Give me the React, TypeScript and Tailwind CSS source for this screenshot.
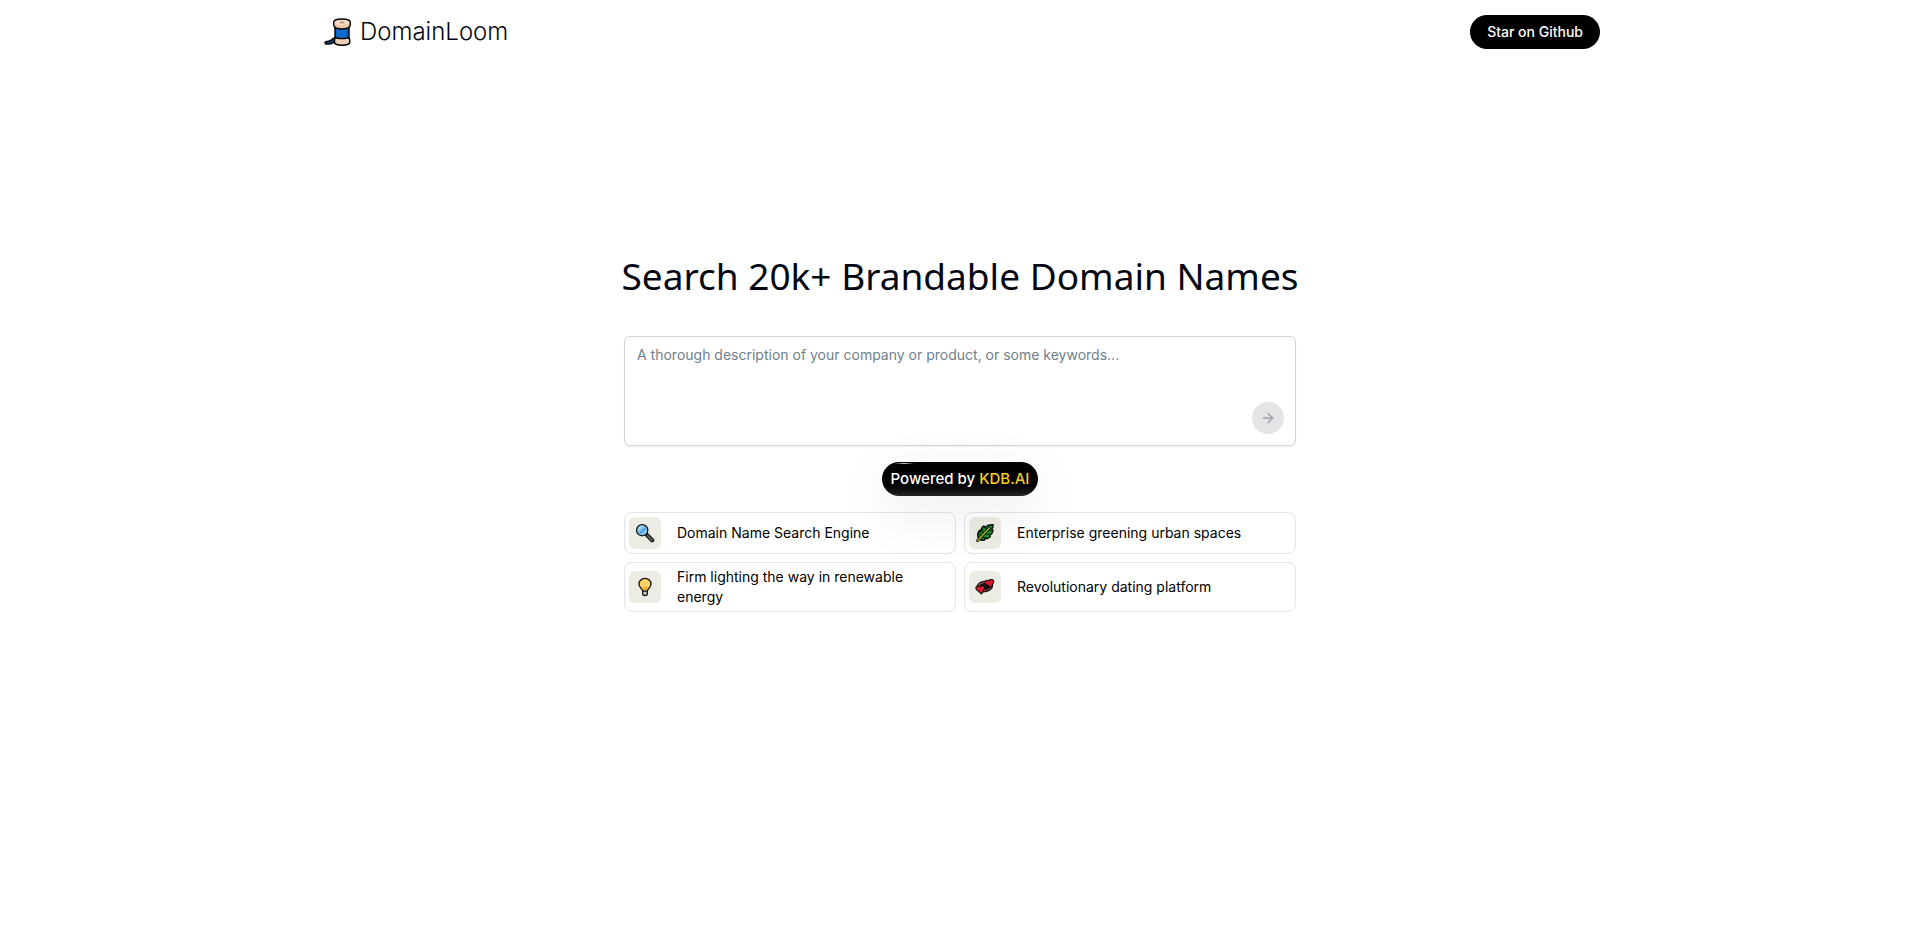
import { useState, type FormEvent, type ReactNode } from "react";
import { ArrowRight } from "lucide-react";

type Example = {
  label: string;
  icon: ReactNode;
};

const SpoolIcon = () => (
  <svg viewBox="0 0 28 28" className="size-7" aria-hidden="true">
    <path
      d="M10.500 20v3.500c-1.200 1.800-3.200 2.600-5.500 2.600H2.200c-1.600 0-1.700-2.200-.2-2.400 3-.2 4.500-.6 6-2.200.6-.8 1.300-1.400 2.500-1.500z"
      fill="#0b3f70"
      stroke="#000"
      strokeWidth="1.300"
      strokeLinejoin="round"
    />
    <path d="M11 8.500h14v13H11z" fill="#0a5fb8" stroke="#000" strokeWidth="1.400" />
    <path d="M13 9h9v12h-9z" fill="#0d6ccb" />
    <path
      d="M10.500 21.500c0-1 1-1.500 2-1.700 4 1.200 7 1.200 11 0 1 .2 2.200.8 2.200 1.700v3c0 1.500-3.500 2.700-7.600 2.700s-7.600-1.200-7.600-2.700z"
      fill="#f0cfb6"
      stroke="#000"
      strokeWidth="1.400"
      strokeLinejoin="round"
    />
    <path
      d="M9.700 4.200C9.700 2.300 13.400 1 18 1s8.300 1.300 8.300 3.200v2.600c0 1.600-1.300 2.700-2.300 3.200-4 1.300-8 1.300-12 0-1-.5-2.300-1.600-2.300-3.200z"
      fill="#edc5aa"
      stroke="#000"
      strokeWidth="1.400"
      strokeLinejoin="round"
    />
    <ellipse cx="18" cy="4.600" rx="7.200" ry="2.500" fill="#f9dfcc" />
    <ellipse cx="18" cy="4.600" rx="2.800" ry="1" fill="#b98f78" />
  </svg>
);

const SearchIcon = () => (
  <svg viewBox="0 0 20 20" className="size-5" aria-hidden="true">
    <path d="M11.500 11.500l5.700 5.700" stroke="#111" strokeWidth="4.200" strokeLinecap="round" />
    <path d="M12.500 12.500l4.700 4.700" stroke="#5c5f62" strokeWidth="2" strokeLinecap="round" />
    <circle cx="7.200" cy="7.200" r="5.600" fill="#92d3f5" stroke="#111" strokeWidth="1.300" />
    <path d="M3.400 9.400l6-6.200c1.500.7 2.300 1.600 2.500 3l-5.200 5.600c-1.500-.2-2.700-1-3.300-2.400z" fill="#61a9e0" />
  </svg>
);

const LeafIcon = () => (
  <svg viewBox="0 0 20 20" className="size-5" aria-hidden="true">
    <path
      d="M3.300 15.200C2.300 12.500 2.600 9.500 4.600 7.300l1.500 1.500C5.600 6.200 6.800 4.300 9 2.900l1.200 1.900c1.300-2 4-3.200 8-3-.1 2-.6 3.700-1.600 5l1.500.6c-.4 2.300-1.600 4-3.600 5.200l.8 1.200c-1.700 1.600-3.700 2.300-6 2.200l.2 1c-1.700.4-3.200.3-4.500-.3z"
      fill="#169b2f"
      stroke="#061006"
      strokeWidth="1.400"
      strokeLinejoin="round"
    />
    <path
      d="M5.200 14.800L4.800 9.500M8.200 11.500l-.5-5.500M11.200 8.300l.2-3.500M5.800 14.300l5.700.2M8.700 11.300l5.700-.2M11.600 8.200l4.200-.6"
      fill="none"
      stroke="#062b0b"
      strokeWidth="1"
      strokeLinecap="round"
    />
    <path d="M2.600 17.500L14.500 5" stroke="#061006" strokeWidth="3" strokeLinecap="round" />
    <path d="M2.600 17.500L14.500 5" stroke="#b4bd2c" strokeWidth="1.400" strokeLinecap="round" />
  </svg>
);

const BulbIcon = () => (
  <svg viewBox="0 0 20 20" className="size-5" aria-hidden="true">
    <path d="M7.700 13h4.600v4c0 2-4.600 2-4.600 0z" fill="#c8cacb" stroke="#111" strokeWidth="1.300" />
    <path
      d="M10 1.300c-3.500 0-6 2.600-6 5.700 0 2 .9 3.200 2 4.300.9.900 1.500 1.500 1.700 2.700h4.600c.2-1.200.8-1.800 1.700-2.700 1.100-1.100 2-2.300 2-4.300 0-3.100-2.500-5.700-6-5.700z"
      fill="#ffd166"
      stroke="#111"
      strokeWidth="1.300"
    />
    <path d="M6.500 10.700c2.300-.9 4.700-.9 7 0-.8.900-1.300 1.500-1.600 2.600H8.100c-.3-1.100-.8-1.700-1.600-2.600z" fill="#f5b02d" />
  </svg>
);

const HeartsIcon = () => (
  <svg viewBox="0 0 20 20" className="size-5" aria-hidden="true">
    <path
      d="M2 9.500C3 6 7.500 3.800 12 4.500l5.300 3.800c.5 3.400-3.800 6.600-9.800 6.500z"
      fill="#d9596a"
      stroke="#111"
      strokeWidth="1.300"
      strokeLinejoin="round"
    />
    <path
      d="M5 9c1-1.800 3.500-2.600 6-2.300l4 2.300c-.5 2.200-2.800 3.300-5.500 3.400z"
      fill="#1b0a0c"
      stroke="#111"
      strokeWidth="1.300"
      strokeLinejoin="round"
    />
    <path
      d="M6.600 17L1.500 12.700C-.2 10.200 2.500 7.700 5 9.700c1.400-1.900 5-.9 4.600 1.700z"
      fill="#e3142d"
      stroke="#111"
      strokeWidth="1.100"
      strokeLinejoin="round"
    />
    <path
      d="M16.500 10.500L10.800 7.300C8.700 5.300 10.800 2.300 13.700 3.700c1.300-2 5.300-1.500 5 1.200z"
      fill="#e3142d"
      stroke="#111"
      strokeWidth="1.100"
      strokeLinejoin="round"
    />
  </svg>
);

const examples: Example[] = [
  { label: "Domain Name Search Engine", icon: <SearchIcon /> },
  { label: "Enterprise greening urban spaces", icon: <LeafIcon /> },
  { label: "Firm lighting the way in renewable energy", icon: <BulbIcon /> },
  { label: "Revolutionary dating platform", icon: <HeartsIcon /> },
];

const Header = () => {
  return (
    <header className="mx-auto flex h-16 w-full max-w-7xl items-center justify-between">
      <a href="/" className="flex items-center gap-2 pl-1 text-2xl font-light">
        <SpoolIcon />
        DomainLoom
      </a>
      <a
        href="#github"
        className="rounded-full bg-black px-[17px] py-2 text-sm/[18px] font-medium text-white hover:bg-gray-800"
      >
        Star on Github
      </a>
    </header>
  );
};

const App = () => {
  const [query, setQuery] = useState<string>("");

  const onSubmit = (e: FormEvent) => {
    e.preventDefault();
  };

  return (
    <div className="min-h-screen bg-white font-['Inter',sans-serif] text-gray-950">
      <Header />
      <main className="mx-auto flex w-full max-w-2xl flex-col items-center pt-46">
        <h1 className="text-center font-['Noto_Sans',sans-serif] text-[37px]/[56px] whitespace-nowrap">
          Search 20k+ Brandable Domain Names
        </h1>
        <form
          onSubmit={onSubmit}
          className="mt-8 flex h-[110px] w-full rounded-md border border-zinc-300 bg-white shadow-xs"
        >
          <textarea
            aria-label="Description"
            value={query}
            onChange={(e) => setQuery(e.target.value)}
            className="grow resize-none py-2 pl-3 text-sm outline-none placeholder:text-[#6f7f8c]"
            placeholder="A thorough description of your company or product, or some keywords..."
          />
          <button
            type="submit"
            aria-label="Search"
            disabled={!query}
            className="mr-[11px] mb-[11px] flex size-8 items-center justify-center self-end rounded-full bg-zinc-200 text-zinc-400"
          >
            <ArrowRight className="size-4" />
          </button>
        </form>
        <a
          href="#kdb"
          className="relative mt-4 rounded-full bg-linear-to-b from-black from-50% to-neutral-800 px-[9px] py-[5px] text-[15px]/[24px] font-medium text-white shadow-[0_16px_56px_rgba(0,0,0,0.09)]"
        >
          <span className="absolute top-px left-3 h-px w-5 bg-linear-to-r from-transparent via-white/80 to-transparent" />
          Powered by <span className="text-[#facc25]">KDB.AI</span>
        </a>
        <div className="mt-4 grid w-full grid-cols-2 gap-2">
          {examples.map((example) => (
            <button
              key={example.label}
              type="button"
              onClick={() => setQuery(example.label)}
              className="flex items-center gap-4 rounded-lg border border-zinc-200 p-1 text-left text-sm text-black hover:bg-gray-50"
            >
              <span className="flex size-8 shrink-0 items-center justify-center rounded-md bg-[#ecece4]">
                {example.icon}
              </span>
              {example.label}
            </button>
          ))}
        </div>
      </main>
    </div>
  );
};

export default App;
